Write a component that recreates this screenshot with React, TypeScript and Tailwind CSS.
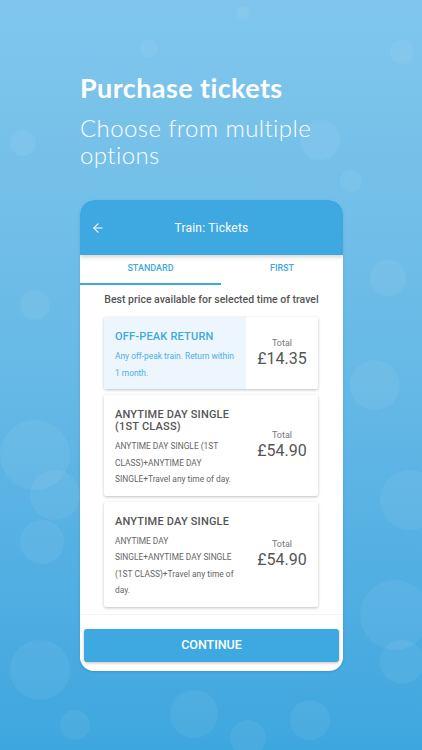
import { ArrowLeft } from 'lucide-react'

interface Ticket {
  title: string
  desc: string
  price: string
  active?: boolean
}

// \u2060 keeps the "+" joined words together like the app does
const tickets: Ticket[] = [
  { title: 'OFF-PEAK RETURN', desc: 'Any off-peak train. Return within 1 month.', price: '£14.35', active: true },
  { title: 'ANYTIME DAY SINGLE (1ST CLASS)', desc: 'ANYTIME DAY SINGLE (1ST CLASS)+\u2060ANYTIME DAY SINGLE+\u2060Travel any time of day.', price: '£54.90' },
  { title: 'ANYTIME DAY SINGLE', desc: 'ANYTIME DAY SINGLE+\u2060ANYTIME DAY SINGLE (1ST CLASS)+\u2060Travel any time of day.', price: '£54.90' },
]

// soft bokeh dots in the backdrop
const dots = [
  { l: 236, t: 6, s: 14 }, { l: 10, t: 130, s: 26 }, { l: 300, t: 120, s: 40 },
  { l: 340, t: 170, s: 22 }, { l: 20, t: 290, s: 30 }, { l: 370, t: 260, s: 36 },
  { l: 0, t: 420, s: 70 }, { l: 350, t: 360, s: 50 }, { l: 380, t: 470, s: 60 },
  { l: 20, t: 520, s: 44 }, { l: 360, t: 580, s: 70 }, { l: 10, t: 640, s: 60 },
  { l: 170, t: 690, s: 48 }, { l: 290, t: 700, s: 40 }, { l: 60, t: 710, s: 30 },
  { l: 390, t: 40, s: 24 }, { l: 140, t: 40, s: 18 }, { l: 30, t: 470, s: 50 },
  { l: 380, t: 640, s: 44 }, { l: 230, t: 720, s: 36 },
]

export default function App() {
  return (
    <div className="relative min-h-[750px] w-full overflow-hidden bg-gradient-to-b from-[#80c6ec] via-[#66b9e6] to-[#3ea6df] font-['Roboto',sans-serif]">
      {dots.map((d, i) => (
        <div
          key={i}
          className="absolute rounded-full bg-white/[0.06]"
          style={{ left: d.l, top: d.t, width: d.s, height: d.s }}
        />
      ))}

      <div className="relative pt-[71px] pl-[80px]">
        <h1 className="text-[27px] leading-[34px] font-bold text-white font-['Lato',sans-serif] tracking-[0.4px]">
          Purchase tickets
        </h1>
        <p className="mt-[9px] w-[260px] text-[24px] leading-[27px] font-light text-white font-['Lato',sans-serif] tracking-[0.4px]">
          Choose from multiple options
        </p>
      </div>

      <div className="relative ml-[80px] mt-[32px] w-[263px] rounded-[14px] bg-white overflow-hidden shadow-sm">
        <div className="relative z-10 h-[55px] bg-[#3ea8e0] flex items-center shadow-[0_2px_4px_rgba(0,0,0,0.18)]">
          <ArrowLeft className="ml-[11px] w-[14px] h-[14px] text-white" strokeWidth={2} />
          <div className="flex-1 text-center pr-[25px] text-white text-[12px] tracking-[0.2px]">Train: Tickets</div>
        </div>

        <div className="flex h-[30px]">
          <div className="w-[141px] flex items-center justify-center border-b-2 border-[#3ea8e0] text-[9px] font-medium text-[#3ea8e0]">
            STANDARD
          </div>
          <div className="flex-1 flex items-center justify-center border-b-2 border-transparent text-[9px] font-medium text-[#3ea8e0]">
            FIRST
          </div>
        </div>

        <div className="pt-[8px] text-center text-[10.5px] leading-[14px] font-medium text-[#555]">
          Best price available for selected time of travel
        </div>

        <div className="mt-[10px] pl-[24px] pr-[25px] flex flex-col gap-[6px]">
          {tickets.map(t => (
            <div key={t.title} className="flex bg-white rounded-[2px] shadow-[0_1px_3px_rgba(0,0,0,0.25)] overflow-hidden">
              <div className={`w-[142px] pl-[11px] pr-[10px] pt-[14px] pb-[8px] ${t.active ? 'bg-[#edf6fd]' : ''}`}>
                <div className={`text-[11px] leading-[12px] font-medium tracking-[0.2px] ${t.active ? 'text-[#3ea8e0]' : 'text-[#555]'}`}>
                  {t.title}
                </div>
                <div className={`mt-[5px] text-[8.4px] leading-[16.5px] ${t.active ? 'text-[#4aaee3]' : 'text-[#666]'}`}>
                  {t.desc}
                </div>
              </div>
              <div className="flex-1 flex flex-col items-center justify-center">
                <div className="text-[9px] leading-[12px] text-[#777]">Total</div>
                <div className="text-[16px] leading-[20px] text-[#555]">{t.price}</div>
              </div>
            </div>
          ))}
        </div>

        <div className="mt-[7px] border-t border-gray-100 pt-[14px] px-[4px] pb-[9px]">
          <div className="h-[33px] rounded-[3px] bg-[#3ea8e0] shadow-[0_1px_3px_rgba(0,0,0,0.25)] flex items-center justify-center text-white text-[12.5px] font-medium">
            CONTINUE
          </div>
        </div>
      </div>
    </div>
  )
}
